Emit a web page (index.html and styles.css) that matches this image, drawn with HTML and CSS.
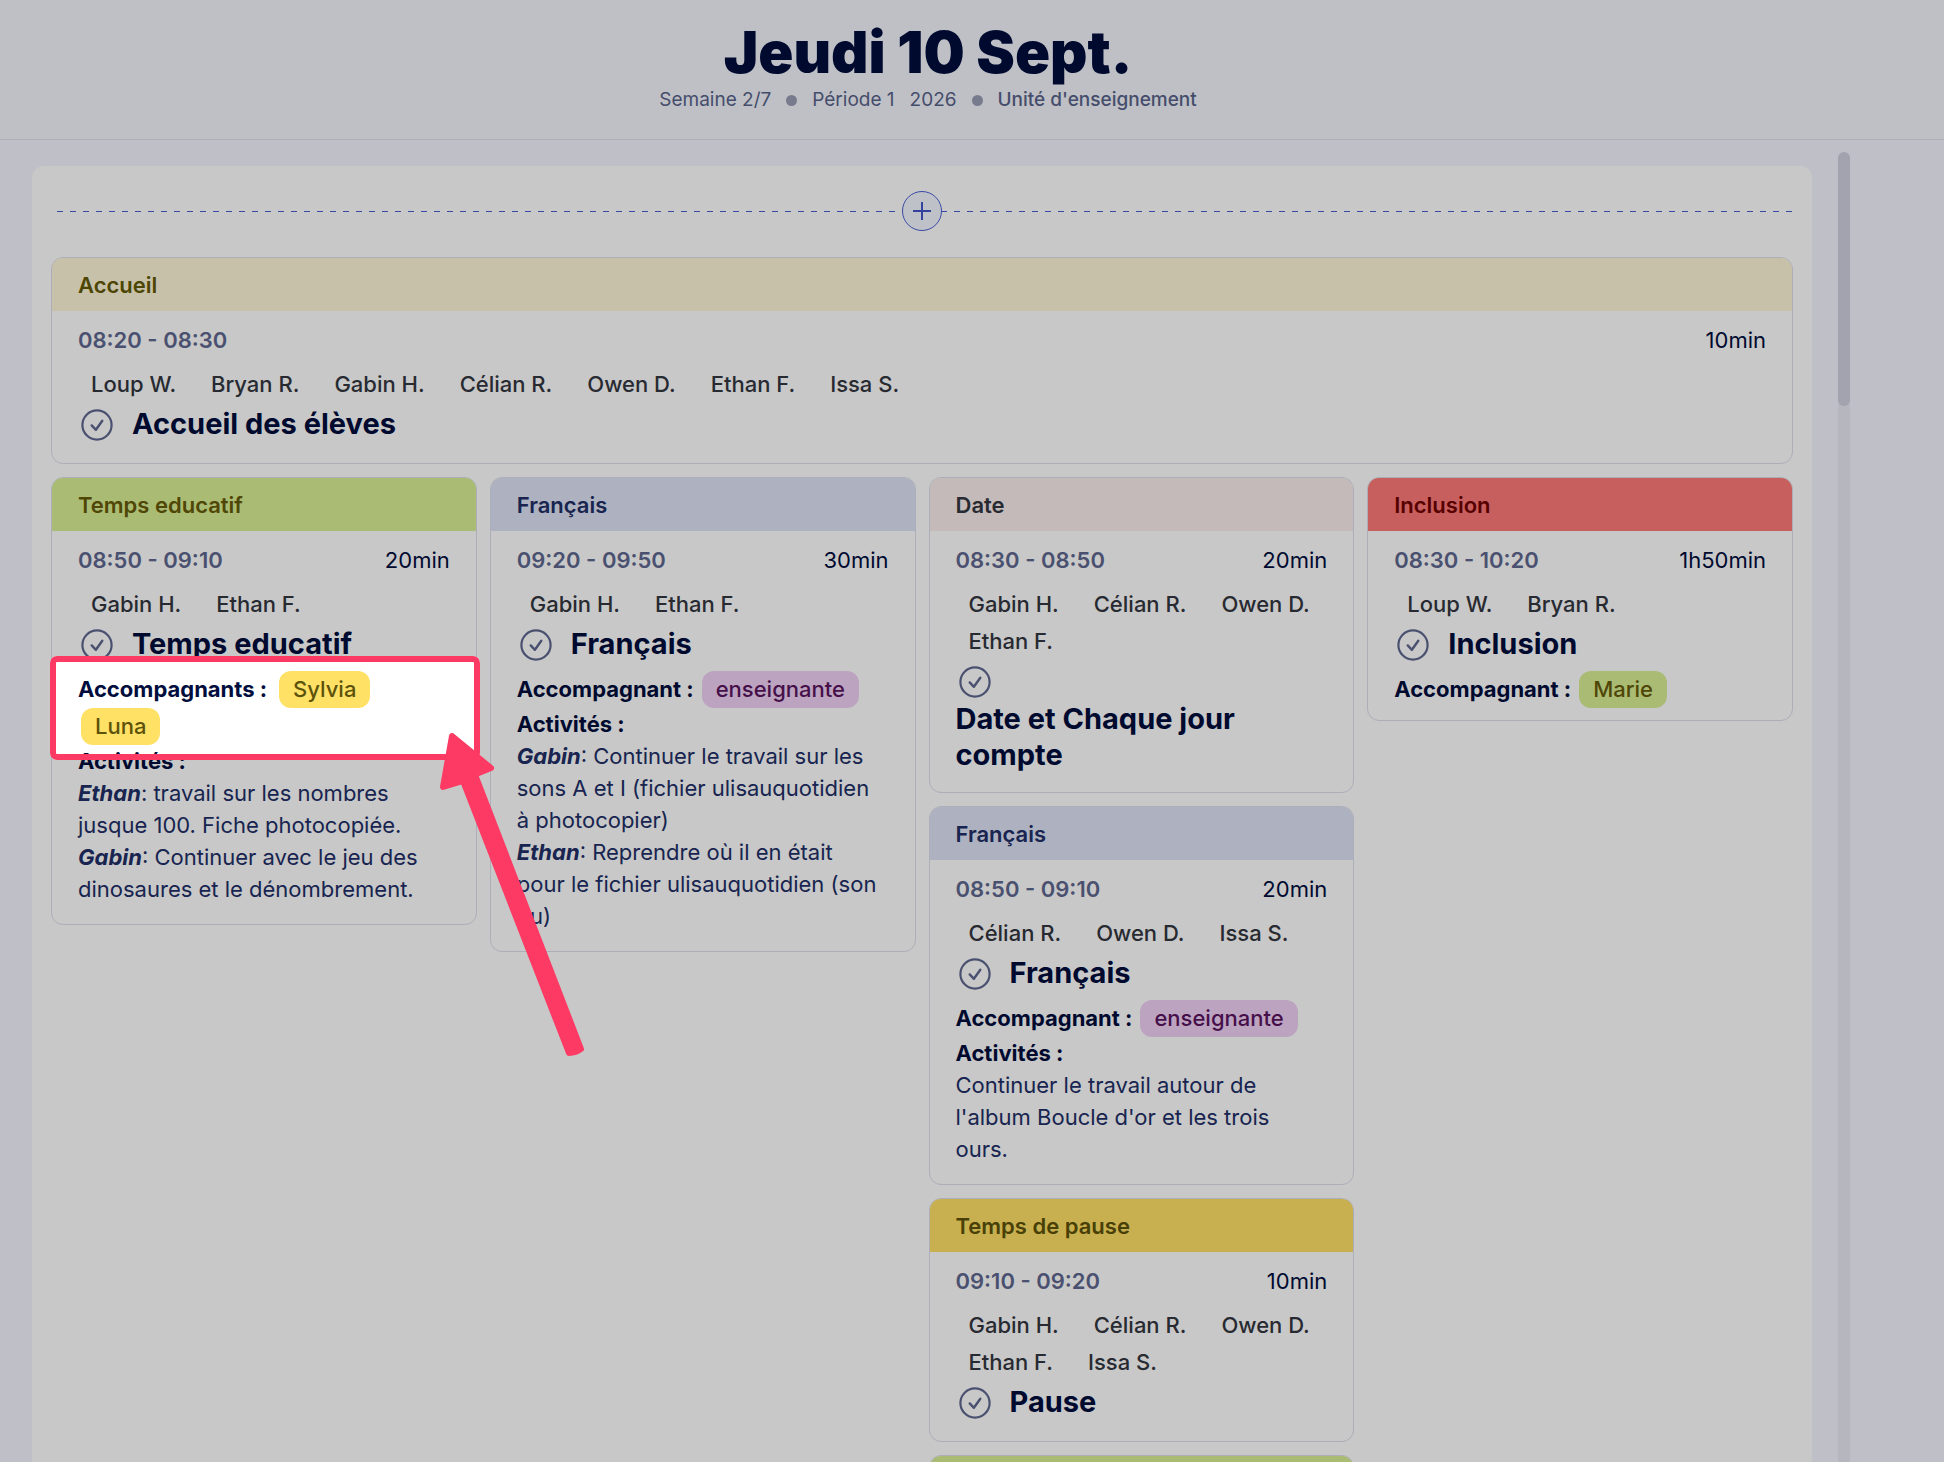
FILE: index.html
```html
<!DOCTYPE html>
<html lang="fr">
<head>
<meta charset="utf-8">
<meta name="viewport" content="width=device-width, initial-scale=1">
<title>Jeudi 10 Sept.</title>
<link rel="stylesheet" href="styles.css">
</head>
<body>
<svg class="sprite" aria-hidden="true">
  <symbol id="check" viewBox="0 0 32 32">
    <circle cx="16" cy="16" r="14.6" fill="none" stroke="currentColor" stroke-width="2.2"/>
    <path d="M10.7 16.4l4.2 4.4 6.4-9" fill="none" stroke="currentColor" stroke-width="2.4" stroke-linecap="round" stroke-linejoin="round"/>
  </symbol>
</svg>

<header class="day-header">
  <h1 class="day-title">Jeudi 10 Sept.</h1>
  <div class="day-meta">
    <span>Semaine 2/7</span>
    <i class="dot"></i>
    <span>Période 1</span>
    <span>2026</span>
    <i class="dot"></i>
    <span class="unit">Unité d'enseignement</span>
  </div>
</header>

<main class="board">
  <section class="panel">
    <div class="insert-row">
      <button class="insert-button" type="button" aria-label="Ajouter un créneau">
        <svg viewBox="0 0 20 20" width="20" height="20"><path d="M10 1v18M1 10h18" stroke="currentColor" stroke-width="2" fill="none"/></svg>
      </button>
    </div>

    <article class="card">
      <div class="card-head cream">Accueil</div>
      <div class="card-body">
        <div class="time-row"><span class="time">08:20 - 08:30</span><span>10min</span></div>
        <div class="pupils"><span>Loup W.</span><span>Bryan R.</span><span>Gabin H.</span><span>Célian R.</span><span>Owen D.</span><span>Ethan F.</span><span>Issa S.</span></div>
        <div class="title-row"><button class="check" type="button" aria-label="Terminer"><svg><use href="#check"/></svg></button><h2>Accueil des élèves</h2></div>
      </div>
    </article>

    <div class="columns">
      <div class="column">
        <article class="card">
          <div class="card-head green">Temps educatif</div>
          <div class="card-body">
            <div class="time-row"><span class="time">08:50 - 09:10</span><span>20min</span></div>
            <div class="pupils"><span>Gabin H.</span><span>Ethan F.</span></div>
            <div class="title-row"><button class="check" type="button" aria-label="Terminer"><svg><use href="#check"/></svg></button><h2>Temps educatif</h2></div>
            <div class="helpers several"><b>Accompagnants :</b> <span class="pill yellow">Sylvia</span> <span class="pill yellow">Luna</span></div>
            <div class="activities">
              <b>Activités :</b>
              <p><strong>Ethan</strong>: travail sur les nombres jusque 100. Fiche photocopiée.</p>
              <p><strong>Gabin</strong>: Continuer avec le jeu des dinosaures et le dénombrement.</p>
            </div>
          </div>
          <div class="spotlight"></div>
          <svg class="arrow" viewBox="436 728 150 332" aria-hidden="true">
            <path d="M452 736L491 768L475 774.500L581 1049Q576 1053 569 1053L463 781L443 787Z" fill="#fc3a63" stroke="#fc3a63" stroke-width="6" stroke-linejoin="round"/>
          </svg>
        </article>
      </div>

      <div class="column">
        <article class="card">
          <div class="card-head lavender">Français</div>
          <div class="card-body">
            <div class="time-row"><span class="time">09:20 - 09:50</span><span>30min</span></div>
            <div class="pupils"><span>Gabin H.</span><span>Ethan F.</span></div>
            <div class="title-row"><button class="check" type="button" aria-label="Terminer"><svg><use href="#check"/></svg></button><h2>Français</h2></div>
            <div class="helpers"><b>Accompagnant :</b> <span class="pill purple">enseignante</span></div>
            <div class="activities">
              <b>Activités :</b>
              <p><strong>Gabin</strong>: Continuer le travail sur les sons A et I (fichier ulisauquotidien à photocopier)</p>
              <p><strong>Ethan</strong>: Reprendre où il en était pour le fichier ulisauquotidien (son ou)</p>
            </div>
          </div>
        </article>
      </div>

      <div class="column">
        <article class="card">
          <div class="card-head rose">Date</div>
          <div class="card-body">
            <div class="time-row"><span class="time">08:30 - 08:50</span><span>20min</span></div>
            <div class="pupils"><span>Gabin H.</span><span>Célian R.</span><span>Owen D.</span><span>Ethan F.</span></div>
            <div class="title-row"><button class="check" type="button" aria-label="Terminer"><svg><use href="#check"/></svg></button><h2>Date et Chaque jour compte</h2></div>
          </div>
        </article>
        <article class="card">
          <div class="card-head lavender">Français</div>
          <div class="card-body">
            <div class="time-row"><span class="time">08:50 - 09:10</span><span>20min</span></div>
            <div class="pupils"><span>Célian R.</span><span>Owen D.</span><span>Issa S.</span></div>
            <div class="title-row"><button class="check" type="button" aria-label="Terminer"><svg><use href="#check"/></svg></button><h2>Français</h2></div>
            <div class="helpers"><b>Accompagnant :</b> <span class="pill purple">enseignante</span></div>
            <div class="activities">
              <b>Activités :</b>
              <p>Continuer le travail autour de l'album Boucle d'or et les trois ours.</p>
            </div>
          </div>
        </article>
        <article class="card">
          <div class="card-head yellow">Temps de pause</div>
          <div class="card-body">
            <div class="time-row"><span class="time">09:10 - 09:20</span><span>10min</span></div>
            <div class="pupils"><span>Gabin H.</span><span>Célian R.</span><span>Owen D.</span><span>Ethan F.</span><span>Issa S.</span></div>
            <div class="title-row"><button class="check" type="button" aria-label="Terminer"><svg><use href="#check"/></svg></button><h2>Pause</h2></div>
          </div>
        </article>
        <article class="card">
          <div class="card-head green"></div>
        </article>
      </div>

      <div class="column">
        <article class="card">
          <div class="card-head red">Inclusion</div>
          <div class="card-body">
            <div class="time-row"><span class="time">08:30 - 10:20</span><span>1h50min</span></div>
            <div class="pupils"><span>Loup W.</span><span>Bryan R.</span></div>
            <div class="title-row"><button class="check" type="button" aria-label="Terminer"><svg><use href="#check"/></svg></button><h2>Inclusion</h2></div>
            <div class="helpers"><b>Accompagnant :</b> <span class="pill green">Marie</span></div>
          </div>
        </article>
      </div>
    </div>
  </section>
  <div class="scrollbar"><div class="thumb"></div></div>
</main>
</body>
</html>
```
FILE: styles.css
```css
* { box-sizing: border-box; }

body {
  margin: 0;
  height: 100vh;
  overflow: hidden;
  display: flex;
  flex-direction: column;
  background: #f2f4fe;
  color: #000d3d;
  font: 400 22px/32px Inter, "Liberation Sans", sans-serif;
}

h1, h2, p { margin: 0; }
button { padding: 0; font: inherit; cursor: pointer; }
.sprite { display: none; }

.day-header {
  flex: none;
  padding: 18px 88px 25px 0;
  border-bottom: 1px solid #dcdfeb;
  background: #f3f5fc;
  text-align: center;
}
.day-title { font-size: 58px; line-height: 68px; font-weight: 900; }
.day-meta {
  display: flex;
  justify-content: center;
  align-items: center;
  gap: 15px;
  font-size: 19px;
  line-height: 28px;
  color: #59638a;
}
.dot { width: 11px; height: 11px; border-radius: 50%; background: #989db4; }
.unit { font-weight: 500; }

.board {
  flex: 1;
  min-height: 0;
  display: flex;
  gap: 26px;
  padding: 12px 94px 0 32px;
}
.panel {
  flex: 1;
  min-width: 0;
  margin-top: 14px;
  padding: 25px 19px;
  border-radius: 12px 12px 0 0;
  background: #fff;
}
.scrollbar { flex: none; width: 12px; border-radius: 6px 6px 0 0; background: #e9eaf3; }
.thumb { height: 254px; border-radius: 6px; background: #cfd0de; }

.insert-row {
  display: flex;
  justify-content: center;
  margin: 0 0 26px 6px;
  background: repeating-linear-gradient(90deg, #4c60d2 0 6px, transparent 6px 13px) center / 100% 1px no-repeat;
}
.insert-button {
  width: 40px;
  height: 40px;
  margin-right: 6px;
  display: grid;
  place-items: center;
  border: 1px solid #4c60d2;
  border-radius: 50%;
  background: #f4f6ff;
  color: #4455c8;
}

.columns {
  display: grid;
  grid-template-columns: repeat(4, minmax(0, 1fr));
  gap: 13px;
  margin-top: 13px;
}
.column { display: flex; flex-direction: column; gap: 13px; }

.card { position: relative; border: 1px solid #dcdfec; border-radius: 12px; }
.card-head {
  min-height: 53px;
  padding: 11px 26px 10px;
  border-radius: 11px 11px 0 0;
  font-weight: 600;
}
.card-body { padding: 13px 26px 12px; }

.cream { background: #fff6d8; color: #635a05; }
.green { background: #d9f095; color: #665a08; }
.lavender { background: #dee3f5; color: #212e66; }
.rose { background: #faedec; color: #333640; }
.yellow { background: #ffe166; color: #5c520a; }
.purple { background: #f0d1f5; color: #5a145f; }
.red { background: #ff7a7a; color: #700000; }

.time-row { display: flex; justify-content: space-between; }
.time { font-weight: 600; color: #5f688f; }

.pupils {
  display: flex;
  flex-wrap: wrap;
  column-gap: 9px;
  margin-top: 10px;
  line-height: 37px;
  font-weight: 500;
  color: #333640;
}
.pupils span { padding: 0 13px; }

.title-row {
  display: flex;
  flex-wrap: wrap;
  align-items: center;
  column-gap: 19px;
  margin-bottom: 8px;
}
.title-row h2 { margin: 1px 0 -1px; font-size: 29px; line-height: 36px; font-weight: 700; }
.check {
  width: 32px;
  height: 32px;
  margin: 6px 0 2px 3px;
  border: 0;
  background: none;
  color: #5f688f;
}
.check svg { display: block; width: 32px; height: 32px; }

.helpers { display: flex; flex-wrap: wrap; column-gap: 5px; line-height: 37px; }
.several { column-gap: 9px; }
.pill { margin-left: 3px; padding: 0 14px; border-radius: 12px; font-weight: 500; }

.activities { margin-bottom: 7px; padding-right: 6px; }
.activities p { color: #212e66; }
.activities strong { font-style: italic; }

/* Guided-tour highlight: frames the helpers and dims the rest of the page */
.spotlight {
  position: absolute;
  z-index: 10;
  left: -2px;
  right: -4px;
  top: 178px;
  height: 104px;
  border: 6px solid #fc3a63;
  border-radius: 7px;
  box-shadow: 0 0 0 3000px rgba(0, 0, 0, 0.216);
  pointer-events: none;
}
.arrow {
  position: absolute;
  z-index: 11;
  top: 250px;
  right: -110px;
  width: 150px;
  height: 332px;
  pointer-events: none;
}
```
